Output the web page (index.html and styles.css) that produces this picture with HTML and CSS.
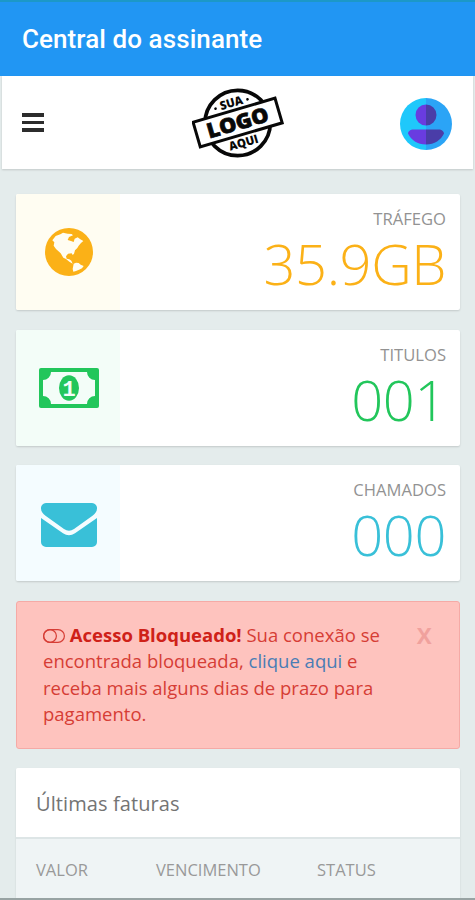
FILE: index.html
```html
<!DOCTYPE html>
<html lang="pt-BR">
<head>
    <meta charset="UTF-8">
    <meta name="viewport" content="width=device-width, initial-scale=1.0">
    <title>Central do assinante</title>
    <link rel="stylesheet" href="styles.css">
</head>
<body>
    <div class="app-bar">Central do assinante</div>

    <header class="navbar">
        <button class="menu-btn" aria-label="Menu"><span></span><span></span><span></span></button>
        <svg class="logo" viewBox="0 0 276 216">
            <circle cx="137" cy="108" r="98" fill="#fff" stroke="#080808" stroke-width="11"/>
            <g transform="rotate(-16.3 137 107)">
                <rect x="9" y="68" width="256" height="77" fill="#fff" stroke="#080808" stroke-width="9"/>
                <text class="logo-main" x="137" y="129" textLength="190" lengthAdjust="spacingAndGlyphs">LOGO</text>
                <text class="logo-small" x="135" y="57" textLength="70" lengthAdjust="spacingAndGlyphs">SUA</text>
                <text class="logo-small" x="137" y="182" textLength="90" lengthAdjust="spacingAndGlyphs">AQUI</text>
                <circle cx="85" cy="48" r="4"/>
                <circle cx="185" cy="48" r="4"/>
            </g>
        </svg>
        <svg class="avatar" viewBox="0 0 52 52">
            <path d="M26 0a26 26 0 0 0 0 52z" fill="#1fc8fb"/>
            <path d="M26 0a26 26 0 0 1 0 52z" fill="#2ba4f6"/>
            <path d="M26 6.500a10.500 10.500 0 0 0 0 21zM26 31.500H13c-3 0-5 2.500-5 4 3 6.500 9.500 11 18 11z" fill="#693ce0"/>
            <path d="M26 6.500a10.500 10.500 0 0 1 0 21zM26 31.500h13c3 0 5 2.500 5 4-3 6.500-9.500 11-18 11z" fill="#4a3da8"/>
        </svg>
    </header>

    <main class="content">
        <div class="card yellow">
            <div class="card-icon">
                <svg width="48" height="48" viewBox="0 0 144 144">
                    <circle cx="72" cy="72" r="72" fill="#fbb117"/>
                    <path fill="#fffdf2" d="M22 37L32 24 46 19 54 14 68 17 80 18 84 22 72 27 68 36 78 39 86 42 89 32 98 28 106 34 115 39 108 45 101 53 97 60 90 67 87 77 83 81 80 76 69 77 63 85 65 92 73 94 79 98 83 107 73 101 63 93 55 89 47 76 33 63 26 53 28 43z"/>
                    <path fill="#fffdf2" d="M86 107L93 104 101 105 107 110 116 114 111 121 102 125 93 129 85 131 83 123z"/>
                </svg>
            </div>
            <div class="card-body">
                <div class="card-label">TRÁFEGO</div>
                <div class="card-value">35.9GB</div>
            </div>
        </div>

        <div class="card green">
            <div class="card-icon">
                <svg width="60" height="40" viewBox="0 0 60 40">
                    <rect width="60" height="40" rx="2" fill="#22c65b"/>
                    <path fill="#f3fdf8" d="M12 4h36a8 8 0 0 0 8 8v16a8 8 0 0 0-8 8H12a8 8 0 0 0-8-8V12a8 8 0 0 0 8-8z"/>
                    <ellipse cx="30" cy="20" rx="10" ry="12.700" fill="#22c65b"/>
                    <text class="bill-number" x="30" y="28">1</text>
                </svg>
            </div>
            <div class="card-body">
                <div class="card-label">TITULOS</div>
                <div class="card-value">001</div>
            </div>
        </div>

        <div class="card blue">
            <div class="card-icon">
                <svg class="mail" width="56" height="44" viewBox="0 0 56 44">
                    <g fill="#39c0d8">
                        <path d="M5 0h46a5 5 0 0 1 5 5.500c0 3-2 5.500-4.500 7.300L33 26q-5 3.500-10 0L4.500 12.800C2 11 0 8.500 0 5.500A5 5 0 0 1 5 0z"/>
                        <path d="M0 15l22 15.200q6 4 12 0L56 15V39a5 5 0 0 1-5 5H5a5 5 0 0 1-5-5z"/>
                    </g>
                </svg>
            </div>
            <div class="card-body">
                <div class="card-label">CHAMADOS</div>
                <div class="card-value">000</div>
            </div>
        </div>

        <div class="alert">
            <p><svg class="toggle" viewBox="0 0 22 14"><rect x=".6" y=".6" width="20.800" height="12.800" rx="6.400"/><circle cx="7" cy="7" r="6.400"/></svg> <b>Acesso Bloqueado!</b> Sua conexão se encontrada bloqueada, <a href="#">clique aqui</a> e receba mais alguns dias de prazo para pagamento.</p>
            <button class="close">x</button>
        </div>

        <div class="panel">
            <h2>Últimas faturas</h2>
            <div class="table-head">
                <span>VALOR</span>
                <span>VENCIMENTO</span>
                <span>STATUS</span>
            </div>
        </div>
    </main>
</body>
</html>
```
FILE: styles.css
```css
* {
    margin: 0;
    padding: 0;
    box-sizing: border-box;
}
body {
    height: 900px;
    display: flex;
    flex-direction: column;
    overflow: hidden;
    background: #e4ecec;
    border-bottom: 2px solid #98a3a3;
    font-family: "Open Sans", sans-serif;
    color: #777;
}
button {
    border: none;
    background: none;
}
.app-bar {
    flex: none;
    height: 76px;
    padding: 2px 22px 0;
    border-top: 2px solid #1c98c8;
    background: #2196f3;
    color: #fff;
    font: 500 26px/70px Roboto, sans-serif;
    letter-spacing: 0.08px;
}
.navbar {
    flex: none;
    height: 93px;
    margin: 0 2px;
    padding: 0 21px 0 20px;
    display: flex;
    align-items: center;
    justify-content: space-between;
    background: #fff;
    box-shadow: 0 1px 2px rgba(0, 0, 0, 0.15);
}
.menu-btn {
    width: 22px;
    display: flex;
    flex-direction: column;
    gap: 4px;
}
.menu-btn span {
    height: 3.500px;
    background: #2c2c2c;
}
.logo {
    width: 92px;
    height: 72px;
    margin: 1px 0 0 31px;
}
.logo text {
    font-family: "Open Sans", sans-serif;
    font-weight: 800;
    text-anchor: middle;
    fill: #080808;
}
.logo-main {
    font-size: 62px;
    stroke: #080808;
    stroke-width: 2;
}
.logo-small {
    font-size: 36px;
}
.avatar {
    width: 52px;
    height: 52px;
    margin-top: 2px;
}
.content {
    flex: 1;
    min-height: 0;
    padding: 25px 15px 0 16px;
    display: flex;
    flex-direction: column;
    gap: 19.500px;
}
.card {
    flex: none;
    height: 116px;
    display: flex;
    border-radius: 2px;
    overflow: hidden;
    background: #fff;
    box-shadow: 0 1px 2px rgba(0, 0, 0, 0.15);
}
.card-icon {
    width: 104px;
    padding-left: 1px;
    display: flex;
    align-items: center;
    justify-content: center;
}
.mail {
    margin-top: 4px;
}
.card-body {
    flex: 1;
    padding: 13px 14px 0 0;
    text-align: right;
}
.card-label {
    font-size: 16.600px;
    line-height: 24px;
    color: #929292;
}
.card-value {
    font-size: 56px;
    font-weight: 300;
    line-height: 65px;
    letter-spacing: -0.4px;
}
.yellow .card-icon { background: #fffdf2; }
.yellow .card-value { color: #fbb117; }
.green .card-icon { background: #f3fdf8; }
.green .card-value { color: #22c65b; }
.blue .card-icon { background: #f4fcff; }
.blue .card-value { color: #39c0d8; }
.bill-number {
    font: bold 22px "Liberation Mono", monospace;
    text-anchor: middle;
    fill: #f3fdf8;
}
.alert {
    flex: none;
    height: 148px;
    padding: 20px 27px 0 26px;
    display: flex;
    justify-content: space-between;
    align-items: flex-start;
    border: 1px solid #f5aaa6;
    border-radius: 3px;
    background: #fec3be;
    color: #d63d35;
    font-size: 18.500px;
    line-height: 26.500px;
}
.alert p {
    width: 350px;
}
.alert b {
    color: #cf2118;
}
.alert a {
    color: #4a7db5;
    text-decoration: none;
}
.toggle {
    width: 22px;
    height: 14px;
    vertical-align: -1px;
    fill: none;
    stroke: #d63d35;
    stroke-width: 1.200;
}
.close {
    color: #f0a19d;
    font: 600 28px/22px "Open Sans", sans-serif;
}
.panel {
    flex: 1;
    border-radius: 2px 2px 0 0;
    overflow: hidden;
    background: #eff4f5;
    box-shadow: 0 1px 2px rgba(0, 0, 0, 0.12);
}
.panel h2 {
    height: 71px;
    padding-left: 20px;
    border-bottom: 2px solid #dde5e6;
    background: #fff;
    font-size: 20px;
    font-weight: 400;
    line-height: 71px;
    letter-spacing: 0.1px;
    color: #747474;
}
.table-head {
    display: grid;
    grid-template-columns: 120px 161px 1fr;
    padding: 19px 20px;
    font-size: 16.500px;
    line-height: 24px;
    color: #999;
}
```
